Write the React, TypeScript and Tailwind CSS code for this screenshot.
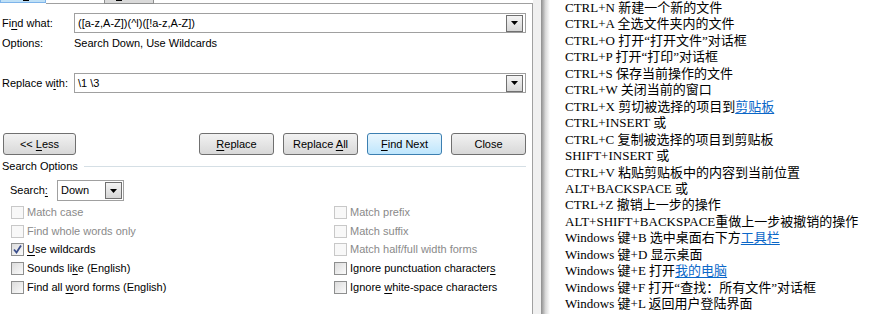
import React from "react";

const DropBtn = ({ className = "" }: { className?: string }) => (
  <div
    className={`flex items-center justify-center w-[17px] h-[17px] border border-[#707070] bg-gradient-to-b from-[#f4f4f4] to-[#d6d6d6] ${className}`}
  >
    <svg width="7" height="4" viewBox="0 0 7 4">
      <path d="M0 0H7L3.5 4Z" fill="#000" />
    </svg>
  </div>
);

const Combo = ({ text }: { text: React.ReactNode }) => (
  <div className="flex items-center h-[20px] w-[452px] border border-[#a0a0a0] bg-white pl-[3px] pr-[2px]">
    <span className="flex-1 text-[11px] text-black">{text}</span>
    <DropBtn />
  </div>
);

const Btn = ({
  children,
  focus = false,
  w = "w-[75px]",
}: {
  children: React.ReactNode;
  focus?: boolean;
  w?: string;
}) => (
  <div
    className={`flex items-center justify-center h-[22px] ${w} rounded-[3px] border text-[11px] text-black ${
      focus
        ? "border-[#3c7fb1] bg-gradient-to-b from-[#eaf6fd] to-[#bee6fd]"
        : "border-[#707070] bg-gradient-to-b from-[#f2f2f2] to-[#d8d8d8]"
    }`}
  >
    <span className="whitespace-pre">{children}</span>
  </div>
);

const Check = ({
  checked = false,
  disabled = false,
}: {
  checked?: boolean;
  disabled?: boolean;
}) => (
  <div
    className={`flex items-center justify-center w-[13px] h-[13px] border ${
      disabled
        ? "border-[#c8c8c8] bg-[#f8f8f8]"
        : "border-[#8e8f8f] bg-gradient-to-br from-[#dcdcdc] to-[#fbfbfb]"
    }`}
  >
    {checked && (
      <svg width="9" height="9" viewBox="0 0 9 9">
        <path
          d="M1 4.5L3.5 7.5L8 0.5"
          fill="none"
          stroke="#3a4e8c"
          strokeWidth="1.8"
        />
      </svg>
    )}
  </div>
);

const CheckRow = ({
  label,
  checked,
  disabled,
}: {
  label: React.ReactNode;
  checked?: boolean;
  disabled?: boolean;
}) => (
  <div className="flex items-center gap-[3px] h-[18.75px]">
    <Check checked={checked} disabled={disabled} />
    <span
      className={`text-[11px] leading-none ${
        disabled ? "text-[#8a8a8a]" : "text-black"
      }`}
    >
      {label}
    </span>
  </div>
);

const U = ({ children }: { children: React.ReactNode }) => (
  <span className="underline underline-offset-[2px]">{children}</span>
);

const A = ({ children }: { children: React.ReactNode }) => (
  <span className="text-[#0b67c8] underline underline-offset-[2px]">
    {children}
  </span>
);

const lines: React.ReactNode[] = [
  "CTRL+N 新建一个新的文件",
  "CTRL+A 全选文件夹内的文件",
  "CTRL+O 打开“打开文件”对话框",
  "CTRL+P 打开“打印”对话框",
  "CTRL+S 保存当前操作的文件",
  "CTRL+W 关闭当前的窗口",
  <>
    CTRL+X 剪切被选择的项目到<A>剪贴板</A>
  </>,
  "CTRL+INSERT 或",
  "CTRL+C 复制被选择的项目到剪贴板",
  "SHIFT+INSERT 或",
  "CTRL+V 粘贴剪贴板中的内容到当前位置",
  "ALT+BACKSPACE 或",
  "CTRL+Z 撤销上一步的操作",
  "ALT+SHIFT+BACKSPACE重做上一步被撤销的操作",
  <>
    Windows 键+B 选中桌面右下方<A>工具栏</A>
  </>,
  "Windows 键+D 显示桌面",
  <>
    Windows 键+E 打开<A>我的电脑</A>
  </>,
  "Windows 键+F 打开“查找：所有文件”对话框",
  "Windows 键+L 返回用户登陆界面",
];

export default function App() {
  return (
    <div className="flex w-[881px] h-[314px] overflow-hidden bg-white font-['Liberation_Sans',Arial,sans-serif]">
      {/* Dialog */}
      <div className="flex flex-col w-[533px] shrink-0 bg-white">
        {/* tab strip */}
        <div className="flex h-[4px] shrink-0">
          <div className="relative w-[46px] h-[3px] bg-[#bfe0f6] border-x border-b border-[#7eb4ea]">
            <div className="absolute left-[22px] top-0 w-[6px] h-[1px] bg-black" />
          </div>
          <div className="w-[58px] border-b border-[#a0a0a0]" />
          <div className="relative w-[50px] h-[4px] bg-[#d9d9d9] border border-t-0 border-[#8e8f8f]">
            <div className="absolute left-[11px] top-0 w-[6px] h-[1px] bg-black" />
          </div>
          <div className="flex-1 h-[4px] border-t border-[#a0a0a0] mt-[3px] border-r" />
        </div>
        <div className="flex-1 flex flex-col border-r border-[#a0a0a0]">
          {/* Find what */}
          <div className="flex items-center mt-[9px] h-[20px]">
            <span className="w-[74px] pl-[2px] text-[11px] text-black">
              Fi<U>n</U>d what:
            </span>
            <Combo text="([a-z,A-Z])(^l)([!a-z,A-Z])" />
          </div>
          {/* Options */}
          <div className="flex items-center mt-[3px] h-[14px] text-[11px] text-black">
            <span className="w-[74px] pl-[2px]">Options:</span>
            <span>Search Down, Use Wildcards</span>
          </div>
          {/* Replace with */}
          <div className="flex items-center mt-[23px] h-[20px]">
            <span className="w-[74px] pl-[2px] text-[11px] text-black">
              Replace w<U>i</U>th:
            </span>
            <Combo text="\1 \3" />
          </div>
          {/* Buttons */}
          <div className="flex items-center mt-[40px] h-[22px]">
            <div className="ml-[3px]">
              <Btn w="w-[73px]">
                {"<< "}
                <U>L</U>ess
              </Btn>
            </div>
            <div className="flex gap-[9px] ml-[123px]">
              <Btn>
                <U>R</U>eplace
              </Btn>
              <Btn>
                {"Replace "}
                <U>A</U>ll
              </Btn>
              <Btn focus>
                <U>F</U>ind Next
              </Btn>
              <Btn>Close</Btn>
            </div>
          </div>
          {/* Search Options header */}
          <div className="flex items-center mt-[4px] h-[14px] pr-[6px]">
            <span className="pl-[2px] pr-[6px] text-[11px] text-black">
              Search Options
            </span>
            <div className="flex-1 h-[1px] bg-[#d5dfe5]" />
          </div>
          {/* Search row */}
          <div className="flex items-center mt-[7px] h-[21px]">
            <span className="w-[57px] pl-[10px] text-[11px] text-black">
              Search<U>:</U>
            </span>
            <div className="flex items-center w-[67px] h-[21px] border border-[#a0a0a0] pl-[3px] pr-[1px]">
              <span className="flex-1 text-[11px] text-black">Down</span>
              <DropBtn />
            </div>
          </div>
          {/* checkboxes */}
          <div className="flex mt-[2px] pl-[11px]">
            <div className="flex flex-col w-[323px]">
              <CheckRow label="Match case" disabled />
              <CheckRow label="Find whole words only" disabled />
              <CheckRow
                label={
                  <>
                    <U>U</U>se wildcards
                  </>
                }
                checked
              />
              <CheckRow
                label={
                  <>
                    Sounds li<U>k</U>e (English)
                  </>
                }
              />
              <CheckRow
                label={
                  <>
                    Find all <U>w</U>ord forms (English)
                  </>
                }
              />
            </div>
            <div className="flex flex-col">
              <CheckRow label="Match prefix" disabled />
              <CheckRow label="Match suffix" disabled />
              <CheckRow label="Match half/full width forms" disabled />
              <CheckRow
                label={
                  <>
                    Ignore punctuation character<U>s</U>
                  </>
                }
              />
              <CheckRow
                label={
                  <>
                    Ignore <U>w</U>hite-space characters
                  </>
                }
              />
            </div>
          </div>
        </div>
      </div>
      {/* gutter */}
      <div className="w-[8px] shrink-0 bg-[#f0f0f0]" />
      <div className="w-[9px] shrink-0 bg-gradient-to-r from-[#8c8c8c] via-[#d8d8d8] to-white" />
      {/* Right text panel */}
      <div className="flex-1 pl-[15px] font-['Liberation_Serif','Noto_Sans_CJK_SC',serif] text-[13px] leading-[16.45px] text-black whitespace-nowrap">
        {lines.map((l, i) => (
          <div key={i}>{l}</div>
        ))}
      </div>
    </div>
  );
}
